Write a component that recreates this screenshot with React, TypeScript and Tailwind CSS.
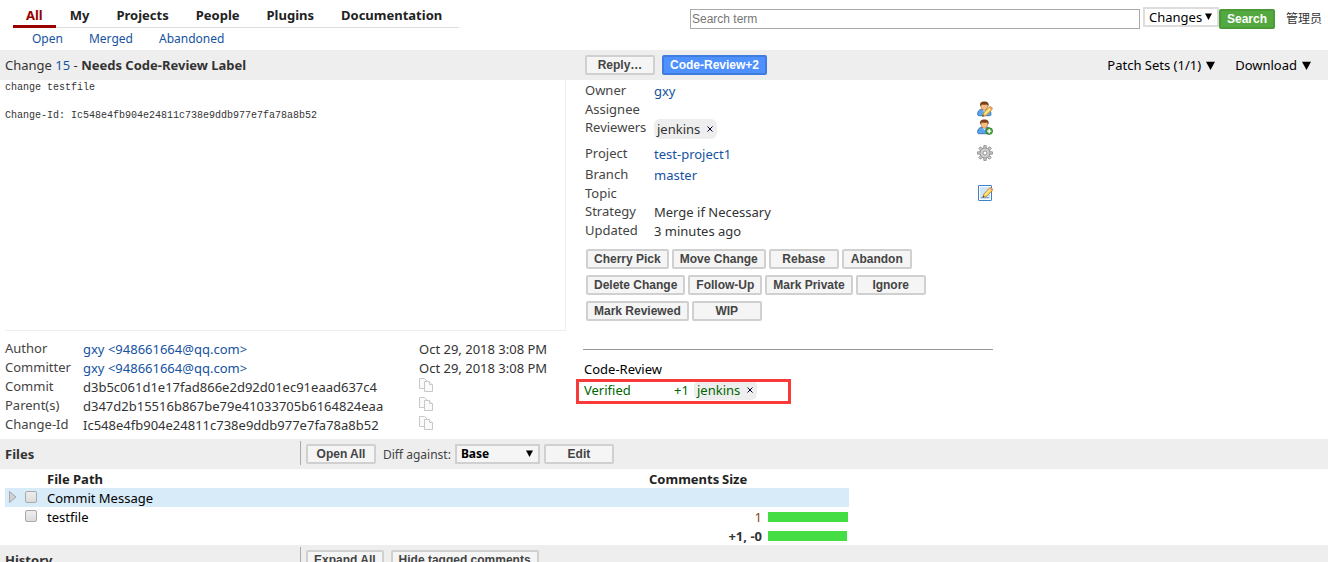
import React from "react";

const primaryTabs = ["All", "My", "Projects", "People", "Plugins", "Documentation"];

const actionRows = [
  ["Cherry Pick", "Move Change", "Rebase", "Abandon"],
  ["Delete Change", "Follow-Up", "Mark Private", "Ignore"],
  ["Mark Reviewed", "WIP"],
];

const link = "text-[#15529f] hover:underline";

function GreyButton({ children }: { children: React.ReactNode }) {
  return (
    <button
      type="button"
      className="h-5 min-w-[70px] shrink-0 whitespace-nowrap rounded-[2px] border-2 border-[#d0d0d0] bg-[#f5f5f5] px-1.5 text-center font-['Liberation_Sans',Arial,sans-serif] text-xs leading-4 font-bold text-[#444]"
    >
      {children}
    </button>
  );
}

function Caret({ className }: { className: string }) {
  return (
    <svg viewBox="0 0 7 7" className={className} aria-hidden="true">
      <path d="M0 .5h7L3.5 7z" fill="#000" />
    </svg>
  );
}

function PersonIcon({ children }: { children: React.ReactNode }) {
  return (
    <svg viewBox="0 0 16 16" className="block size-4" aria-hidden="true">
      <path d="M.6 13.200c0-2.900 1.500-4.600 4-4.900h5.400c2.500.3 4 2 4 4.900 0 1.100-.6 1.500-1.600 1.500H2.200c-1 0-1.600-.4-1.600-1.500z" fill="#5aa5ee" stroke="#2b66a8" strokeWidth=".8" />
      <path d="M5.800 9 7.300 11.200 8.800 9z" fill="#fff" />
      <path d="M4 4.500c0-2 1.200-3 3.300-3s3.400 1 3.400 3.200c0 2.800-1.300 4.600-3.400 4.600S4 7.300 4 4.500z" fill="#f5bd84" stroke="#a4622c" strokeWidth=".6" />
      <path d="M3.200 5.600C2.400 2 4 .4 7.300.4c3.400 0 5 1.800 4.200 5.200-.4-1.300-1-2-2.200-2.100-1.600.4-3.100.2-4.300-.1-.9.400-1.400 1.200-1.800 2.200z" fill="#7d3f16" />
      {children}
    </svg>
  );
}

function Pencil() {
  return (
    <g>
      <path d="m6.500 12 5.600-5.900c1.500-1.300 3.900.7 2.900 2.500l-5.800 5.800-3.500 1z" fill="#f9cf5a" stroke="#b8842a" strokeWidth=".8" />
      <path d="m7.900 12.900 5.500-5.800" stroke="#fff0ae" strokeWidth="1.100" />
      <path d="m11.900 6.400 2.600 2.600.6-.8c.5-1.500-1.300-2.800-2.600-2.300z" fill="#e79a67" />
      <path d="m5.300 15.500.6-1.700 1.100 1.100z" fill="#333" />
    </g>
  );
}

function AssigneeIcon() {
  return <PersonIcon><Pencil /></PersonIcon>;
}

function AddReviewerIcon() {
  return (
    <PersonIcon>
      <circle cx="12.200" cy="12.100" r="3.400" fill="#4fa43b" stroke="#28721f" strokeWidth=".7" />
      <path d="M12.200 10v4.200M10.100 12.100h4.200" stroke="#fff" strokeWidth="1.400" />
    </PersonIcon>
  );
}

function GearIcon() {
  return (
    <svg viewBox="0 0 16 16" className="block size-4" aria-hidden="true">
      <g fill="#c9c9c9" stroke="#858585" strokeWidth=".8">
        {[0, 45, 90, 135, 180, 225, 270, 315].map((a) => (
          <path key={a} d="M6.500 4 6.900.4h2.200l.4 3.600z" transform={`rotate(${a} 8 8)`} />
        ))}
        <circle cx="8" cy="8" r="4.900" />
      </g>
      <circle cx="8" cy="8" r="4.500" fill="#cecece" />
      <circle cx="8" cy="8" r="2" fill="#fff" stroke="#858585" strokeWidth=".8" />
    </svg>
  );
}

function EditIcon() {
  return (
    <svg viewBox="0 0 16 16" className="block size-4" aria-hidden="true">
      <rect x="1.500" y=".5" width="13" height="15" rx=".5" fill="#fff" stroke="#3f82c7" />
      <rect x="3" y="2" width="10" height="12" fill="#cfe5fb" />
      <path d="M4 12.500h8" stroke="#70a9df" />
      <g transform="translate(.3 -3)"><Pencil /></g>
    </svg>
  );
}

function CopyButton({ label }: { label: string }) {
  return (
    <button type="button" aria-label={label} className="block">
      <svg viewBox="0 0 14 14" className="block size-3.5" fill="#fafafa" stroke="#c8c8c8" aria-hidden="true">
        <path d="M.5.5h5l2.500 2.500v7.500H.5z" />
        <path d="M5.500 3.500h5l3 3v7h-8z" />
        <path d="M10.500 3.500v3h3" />
      </svg>
    </button>
  );
}

function InfoRow({ label, height, children, icon }: { label: string; height: string; children?: React.ReactNode; icon?: React.ReactNode }) {
  return (
    <div className={`flex items-start ${height}`}>
      <dt className="w-[69px] shrink-0 text-[#444]">{label}</dt>
      <dd className="flex min-w-0 grow items-start justify-between pt-px">
        <div>{children}</div>
        {icon}
      </dd>
    </div>
  );
}

function ReviewerChip() {
  return (
    <span className="inline-flex h-5 items-center rounded-md bg-[#eee] px-[3px]">
      jenkins
      <button type="button" aria-label="Remove jenkins" className="ml-1.5 px-px text-[#000033]">
        <svg viewBox="0 0 6 6" className="block size-1.5" stroke="currentColor" aria-hidden="true">
          <path d="m.5.5 5 5m0-5-5 5" />
        </svg>
      </button>
    </span>
  );
}

function IconButton({ label, children }: { label: string; children: React.ReactNode }) {
  return <button type="button" aria-label={label}>{children}</button>;
}

function SectionBar({ title, children }: { title: string; children: React.ReactNode }) {
  return (
    <div className="flex h-[30px] bg-[#eee]">
      <h2 className="w-[300px] shrink-0 pl-[5px] leading-[30px] font-bold text-[#333]">{title}</h2>
      <div className="mt-0.5 flex h-6 items-center border-l border-[#aaa] pt-0.5 pl-[5px]">{children}</div>
    </div>
  );
}

function RowCheckbox({ label }: { label: string }) {
  return (
    <input
      type="checkbox"
      aria-label={label}
      className="block size-3 appearance-none rounded-[2px] border border-[#a9a9a9] bg-linear-to-b from-[#eee] to-[#dcdcdc] checked:bg-[#4d90fe]"
    />
  );
}

function CommitRow({ label, children, end }: { label: string; children: React.ReactNode; end: React.ReactNode }) {
  return (
    <tr className="h-[19px]">
      <th scope="row" className="w-[78px] p-0 text-left align-top font-normal text-[#444]">{label}</th>
      <td className="w-[336px] p-0 pt-px align-top">{children}</td>
      <td className="p-0 pt-px align-top">{end}</td>
    </tr>
  );
}

export default function App() {
  return (
    <div className="h-screen overflow-hidden bg-white font-['Noto_Sans','Noto_Sans_CJK_SC',sans-serif] text-[13px] leading-[18px] text-[#333]">
      <header className="flex h-[50px] items-start justify-between">
        <nav aria-label="Main">
          <ul className="ml-[13px] flex h-7 gap-px border-b border-[#ddd] pr-1 leading-[30px] font-bold text-[#222]">
            {primaryTabs.map((tab, i) => (
              <li key={tab}>
                <a
                  href="#"
                  className={i === 0 ? "block h-7 border-b-[3px] border-[#900] px-[13px] text-[#900]" : "block h-7 px-[13px]"}
                >
                  {tab}
                </a>
              </li>
            ))}
          </ul>
          <ul className="ml-[19px] flex text-xs leading-[22px]">
            {["Open", "Merged", "Abandoned"].map((item) => (
              <li key={item} className="px-[13px]"><a href="#" className={link}>{item}</a></li>
            ))}
          </ul>
        </nav>
        <form className="flex items-start pt-[7px] pr-1.5" onSubmit={(e) => e.preventDefault()}>
          <input
            type="text"
            aria-label="Search term"
            placeholder="Search term"
            className="mt-0.5 h-5 w-[450px] border border-[#a9a9a9] bg-white px-px font-['Liberation_Sans',Arial,sans-serif] text-xs placeholder:text-[#777]"
          />
          <div className="relative ml-[3px]">
            <select aria-label="Search category" className="block h-5 w-[76px] appearance-none border-2 border-[#ddd] bg-white pl-1 leading-4 text-black">
              <option>Changes</option>
            </select>
            <Caret className="pointer-events-none absolute top-1.5 right-[7px] size-[7px]" />
          </div>
          <button type="submit" className="mt-0.5 h-5 w-14 rounded-[2px] border-2 border-[#4a9a38] bg-[#53a93f] font-['Liberation_Sans',Arial,sans-serif] text-xs leading-4 font-bold text-white">
            Search
          </button>
          <a href="#" className="ml-[11px] text-xs leading-6 text-[#333]">管理员</a>
        </form>
      </header>

      <div className="flex h-[30px] items-center bg-[#eee]">
        <h1 className="w-[585px] shrink-0 pl-[5px]">
          Change <a href="#" className={link}>15</a> - <strong>Needs Code-Review Label</strong>
        </h1>
        <div className="flex grow gap-[7px]">
          <GreyButton>Reply…</GreyButton>
          <button type="button" className="h-5 rounded-[2px] border-2 border-[#3f7ce0] bg-[#4d90fe] px-1.5 font-['Liberation_Sans',Arial,sans-serif] text-xs leading-4 font-bold whitespace-nowrap text-white">
            Code-Review+2
          </button>
        </div>
        <div className="flex shrink-0 gap-5 pr-[17px] text-black">
          <button type="button" className="flex items-center gap-[5px]">Patch Sets (1/1) <Caret className="size-[9px]" /></button>
          <button type="button" className="flex items-center gap-[5px]">Download <Caret className="size-[9px]" /></button>
        </div>
      </div>

      <main>
        <div className="flex h-[359px] items-start">
          <section className="w-[566px] shrink-0 pl-[5px]" aria-label="Commit">
            <pre className="h-[251px] border-r border-b border-[#eee] pt-px font-['Liberation_Mono',monospace] text-[10px] leading-[14px]">
              {"change testfile\n\nChange-Id: Ic548e4fb904e24811c738e9ddb977e7fa78a8b52"}
            </pre>
            <table className="mt-2 border-collapse">
              <tbody>
                <CommitRow label="Author" end="Oct 29, 2018 3:08 PM"><a href="#" className={link}>gxy &lt;948661664@qq.com&gt;</a></CommitRow>
                <CommitRow label="Committer" end="Oct 29, 2018 3:08 PM"><a href="#" className={link}>gxy &lt;948661664@qq.com&gt;</a></CommitRow>
                <CommitRow label="Commit" end={<CopyButton label="Copy commit" />}>d3b5c061d1e17fad866e2d92d01ec91eaad637c4</CommitRow>
                <CommitRow label="Parent(s)" end={<CopyButton label="Copy parent" />}>d347d2b15516b867be79e41033705b6164824eaa</CommitRow>
                <CommitRow label="Change-Id" end={<CopyButton label="Copy change ID" />}>Ic548e4fb904e24811c738e9ddb977e7fa78a8b52</CommitRow>
              </tbody>
            </table>
          </section>

          <section className="ml-[17px] w-[410px] shrink-0 pt-px" aria-label="Change details">
            <dl className="pl-0.5">
              <InfoRow label="Owner" height="h-[19px]"><a href="#" className={link}>gxy</a></InfoRow>
              <InfoRow label="Assignee" height="h-[18px]" icon={<IconButton label="Edit assignee"><AssigneeIcon /></IconButton>} />
              <InfoRow label="Reviewers" height="h-[26px]" icon={<IconButton label="Add reviewer"><AddReviewerIcon /></IconButton>}>
                <ReviewerChip />
              </InfoRow>
              <InfoRow label="Project" height="h-[21px]" icon={<IconButton label="Project settings"><GearIcon /></IconButton>}>
                <a href="#" className={link}>test-project1</a>
              </InfoRow>
              <InfoRow label="Branch" height="h-[19px]"><a href="#" className={link}>master</a></InfoRow>
              <InfoRow label="Topic" height="h-[18px]" icon={<IconButton label="Edit topic"><EditIcon /></IconButton>} />
              <InfoRow label="Strategy" height="h-[19px]">Merge if Necessary</InfoRow>
              <InfoRow label="Updated" height="h-[19px]">3 minutes ago</InfoRow>
            </dl>
            <div className="mt-[9px] flex flex-col gap-1.5 pl-[3px]">
              {actionRows.map((row) => (
                <div key={row[0]} className="flex gap-[3px]">
                  {row.map((name) => <GreyButton key={name}>{name}</GreyButton>)}
                </div>
              ))}
            </div>
            <hr className="mt-7 border-t border-[#999]" />
            <div className="mt-2.5 pl-px">
              <div className="h-5 text-black">Code-Review</div>
              <div className="relative flex h-5 items-center text-[#060]">
                <span className="w-[90px]">Verified</span>
                <span className="w-5">+1</span>
                <ReviewerChip />
                <div className="pointer-events-none absolute -top-px -left-2 h-[25px] w-[215px] border-3 border-[#f83a3a]" />
              </div>
            </div>
          </section>
        </div>

        <SectionBar title="Files">
          <GreyButton>Open All</GreyButton>
          <label htmlFor="diff-base" className="mt-0.5 ml-[7px] text-xs text-[#444]">Diff against:</label>
          <div className="relative mr-1 ml-1">
            <select id="diff-base" className="block h-5 w-[85px] appearance-none border-2 border-[#d0d0d0] bg-[#f5f5f5] pl-1 text-xs leading-4 font-bold text-black">
              <option>Base</option>
            </select>
            <Caret className="pointer-events-none absolute top-1.5 right-[7px] size-[7px]" />
          </div>
          <GreyButton>Edit</GreyButton>
        </SectionBar>

        <table className="mt-px mb-0 ml-[5px] w-[844px] table-fixed border-collapse text-black">
          <colgroup>
            <col className="w-[42px]" />
            <col />
            <col className="w-[73px]" />
            <col className="w-10" />
            <col className="w-[87px]" />
          </colgroup>
          <thead>
            <tr className="h-[18px] text-left text-[#222]">
              <th className="p-0" aria-label="Select" />
              <th className="p-0">File Path</th>
              <th className="p-0">Comments</th>
              <th className="p-0" colSpan={2}>Size</th>
            </tr>
          </thead>
          <tbody>
            <tr className="h-[19px] bg-[#d8ebf9]">
              <td className="p-0 pb-0.5">
                <div className="flex items-center gap-2 pl-1">
                  <svg viewBox="0 0 8 12" className="h-3 w-2" aria-hidden="true"><path d="M.5.5v11l6.500-5.500z" fill="#d0d0d0" stroke="#999" strokeWidth=".8" /></svg>
                  <RowCheckbox label="Commit Message reviewed" />
                </div>
              </td>
              <td className="p-0"><a href="#">Commit Message</a></td>
              <td className="p-0" />
              <td className="p-0" />
              <td className="p-0" />
            </tr>
            <tr className="h-[19px]">
              <td className="p-0 pb-0.5 pl-5"><RowCheckbox label="testfile reviewed" /></td>
              <td className="p-0"><a href="#">testfile</a></td>
              <td className="p-0" />
              <td className="p-0 text-right text-[#8b4513]">1</td>
              <td className="p-0 pl-1.5"><div className="h-2.5 w-20 bg-[#4d4]" /></td>
            </tr>
            <tr className="h-[19px] font-bold text-[#333]">
              <td className="p-0" />
              <td className="p-0" />
              <td className="p-0" />
              <td className="p-0 text-right whitespace-nowrap">+1, -0</td>
              <td className="p-0 pl-1.5"><div className="h-2.5 w-[79px] bg-[#4d4]" /></td>
            </tr>
          </tbody>
        </table>

        <SectionBar title="History">
          <div className="flex gap-[7px]">
            <GreyButton>Expand All</GreyButton>
            <GreyButton>Hide tagged comments</GreyButton>
          </div>
        </SectionBar>
      </main>
    </div>
  );
}
